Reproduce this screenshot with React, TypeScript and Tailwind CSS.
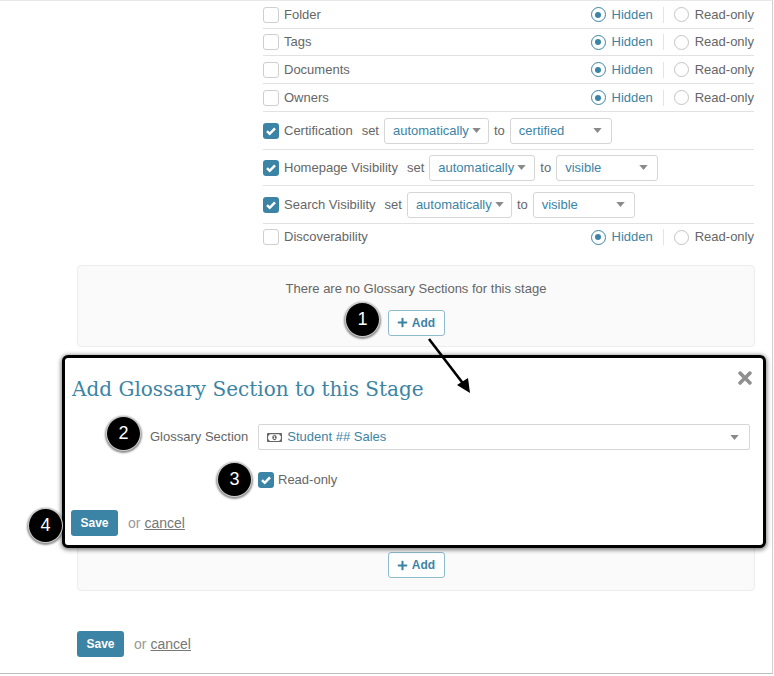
import { FaPlus, FaRegMoneyBillAlt, FaTimes } from "react-icons/fa";

const TEAL = "text-[#3c84a5]";

function Caret({ className = "" }: { className?: string }) {
  return (
    <svg viewBox="0 0 10 6" width="9" height="5" className={className}>
      <path d="M0 0h10L5 6z" fill="#8a8a8a" />
    </svg>
  );
}

function Check({ checked }: { checked?: boolean }) {
  if (!checked) {
    return <span className="w-[16px] h-[16px] shrink-0 rounded-[3px] border border-[#cfcfcf] bg-white" />;
  }
  return (
    <span className="w-[16px] h-[16px] shrink-0 rounded-[3px] bg-[#3c84a5] flex items-center justify-center">
      <svg viewBox="0 0 12 12" width="12" height="12">
        <path d="M2 6.2l2.7 2.6L10 3.4" fill="none" stroke="#fff" strokeWidth="2.5" />
      </svg>
    </span>
  );
}

function Radio({ on }: { on?: boolean }) {
  return (
    <span
      className={`w-[15px] h-[15px] rounded-full border-[1.5px] flex items-center justify-center ${
        on ? "border-[#3c84a5]" : "border-[#c4c4c4]"
      }`}
    >
      {on && <span className="w-[6px] h-[6px] rounded-full bg-[#3c84a5]" />}
    </span>
  );
}

function HiddenRow({ label, h, last }: { label: string; h: string; last?: boolean }) {
  return (
    <div className={`flex items-center justify-between ${h} ${last ? "" : "border-b border-[#e2e2e2]"}`}>
      <div className="flex items-center gap-[5px]">
        <Check />
        <span className="text-[#666]">{label}</span>
      </div>
      <div className="flex items-center">
        <Radio on />
        <span className={`ml-[6px] ${TEAL}`}>Hidden</span>
        <span className="w-px h-[16px] bg-[#e4e4e4] mx-[10px]" />
        <Radio />
        <span className="ml-[6px] text-[#666]">Read-only</span>
      </div>
    </div>
  );
}

function Select({ value, w, bold }: { value: string; w: string; bold?: boolean }) {
  return (
    <span
      className={`${w} h-[26px] rounded-[3px] border border-[#d6d6d6] bg-white flex items-center ${
        bold ? "pl-[8px] gap-[3px]" : "pl-[8px] pr-[9px] justify-between"
      }`}
    >
      <span className={TEAL}>{value}</span>
      <Caret />
    </span>
  );
}

function SetRow({ label, to, h, sel }: { label: string; to: string; h: string; sel: string }) {
  return (
    <div className={`flex items-center ${h} border-b border-[#e2e2e2]`}>
      <Check checked />
      <span className="ml-[5px] text-[#666]">{label}</span>
      <span className="ml-[9px] text-[#666]">set</span>
      <span className="ml-[5px]">
        <Select value="automatically" w={sel} bold />
      </span>
      <span className="ml-[5px] mr-[5px] text-[#666]">to</span>
      <Select value={to} w="w-[102px]" />
    </div>
  );
}

function AddButton() {
  return (
    <button className="w-[57px] h-[26px] rounded-[3px] border border-[#8fbbcf] bg-white flex items-center justify-center gap-[4px] text-[#3c84a5] font-bold text-[12px]">
      <FaPlus size={11} />
      Add
    </button>
  );
}

function SaveRow() {
  return (
    <div className="flex items-center">
      <button className="w-[47px] h-[26px] rounded-[3px] bg-[#3c84a5] text-white font-bold text-[12px]">Save</button>
      <span className="ml-[10px] text-[14px] text-[#999]">or</span>
      <span className="ml-[4px] text-[14px] text-[#777] underline">cancel</span>
    </div>
  );
}

function Badge({ n, className }: { n: number; className: string }) {
  return (
    <span
      className={`absolute w-[35px] h-[35px] rounded-full bg-black text-white text-[18px] flex items-center justify-center shadow-[0_1px_2px_1px_rgba(0,0,0,0.45)] border border-white/80 ${className}`}
    >
      {n}
    </span>
  );
}

export default function App() {
  return (
    <div className="relative w-[774px] h-[676px] overflow-hidden bg-white text-[13px] font-['Liberation_Sans',Arial,sans-serif]">
      <div className="h-[674px] w-[773px] border-r border-b border-t border-[#bdbdbd] border-t-[#e8e8e8] border-r-[#d0d0d0]">
        <div className="ml-[263px] w-[491px]">
          <HiddenRow label="Folder" h="h-[28px]" />
          <HiddenRow label="Tags" h="h-[27px]" />
          <HiddenRow label="Documents" h="h-[28px]" />
          <HiddenRow label="Owners" h="h-[28px]" />
          <SetRow label="Certification" to="certified" h="h-[38px]" sel="w-[105px]" />
          <SetRow label="Homepage Visibility" to="visible" h="h-[36px]" sel="w-[106px]" />
          <SetRow label="Search Visibility" to="visible" h="h-[38px]" sel="w-[105px]" />
          <HiddenRow label="Discoverability" h="h-[26px]" last />
        </div>

        <div className="ml-[77px] mt-[15px] w-[678px] h-[82px] rounded-[4px] border border-[#ececec] bg-[#fafafa] flex flex-col items-center pt-[13px]">
          <span className="text-[#666] mb-[11px]">There are no Glossary Sections for this stage</span>
          <AddButton />
        </div>

        <div className="ml-[77px] mt-[10px] w-[678px] h-[234px] rounded-[4px] border border-[#ececec] bg-[#fafafa] flex flex-col items-center justify-end pb-[12px]">
          <AddButton />
        </div>

        <div className="ml-[77px] mt-[40px]">
          <SaveRow />
        </div>
      </div>

      <div className="absolute left-[62px] top-[355px] w-[704px] h-[193px] rounded-[6px] border-[3px] border-black bg-white shadow-[0_1px_4px_1px_rgba(0,0,0,0.5)]">
        <FaTimes size={20} className="absolute right-[8px] top-[10px] text-[#8f8f8f]" />
        <h2 className="ml-[7px] mt-[17px] text-[20px] leading-[28px] text-[#3c84a5] font-['DejaVu_Serif',serif]">
          Add Glossary Section to this Stage
        </h2>
        <div className="mt-[21px] flex items-center">
          <span className="ml-[85px] text-[#666]">Glossary Section</span>
          <span className="ml-[10px] w-[492px] h-[26px] rounded-[2px] border border-[#d6d6d6] flex items-center pl-[8px] pr-[10px]">
            <FaRegMoneyBillAlt size={15} className="text-[#666]" />
            <span className={`ml-[5px] ${TEAL}`}>Student ## Sales</span>
            <Caret className="ml-auto" />
          </span>
        </div>
        <div className="mt-[20px] h-[20px] ml-[193px] flex items-center gap-[4px]">
          <Check checked />
          <span className="text-[#666]">Read-only</span>
        </div>
        <div className="mt-[20px] ml-[6px]">
          <SaveRow />
        </div>
      </div>

      <svg className="absolute left-[420px] top-[330px]" width="70" height="70" viewBox="0 0 70 70">
        <path d="M9 9L45 56" stroke="#000" strokeWidth="2.6" />
        <path d="M50 63L37 55l11-7z" fill="#000" />
      </svg>

      <Badge n={1} className="left-[345px] top-[302px]" />
      <Badge n={2} className="left-[106px] top-[416px]" />
      <Badge n={3} className="left-[217px] top-[462px]" />
      <Badge n={4} className="left-[28px] top-[508px]" />
    </div>
  );
}
